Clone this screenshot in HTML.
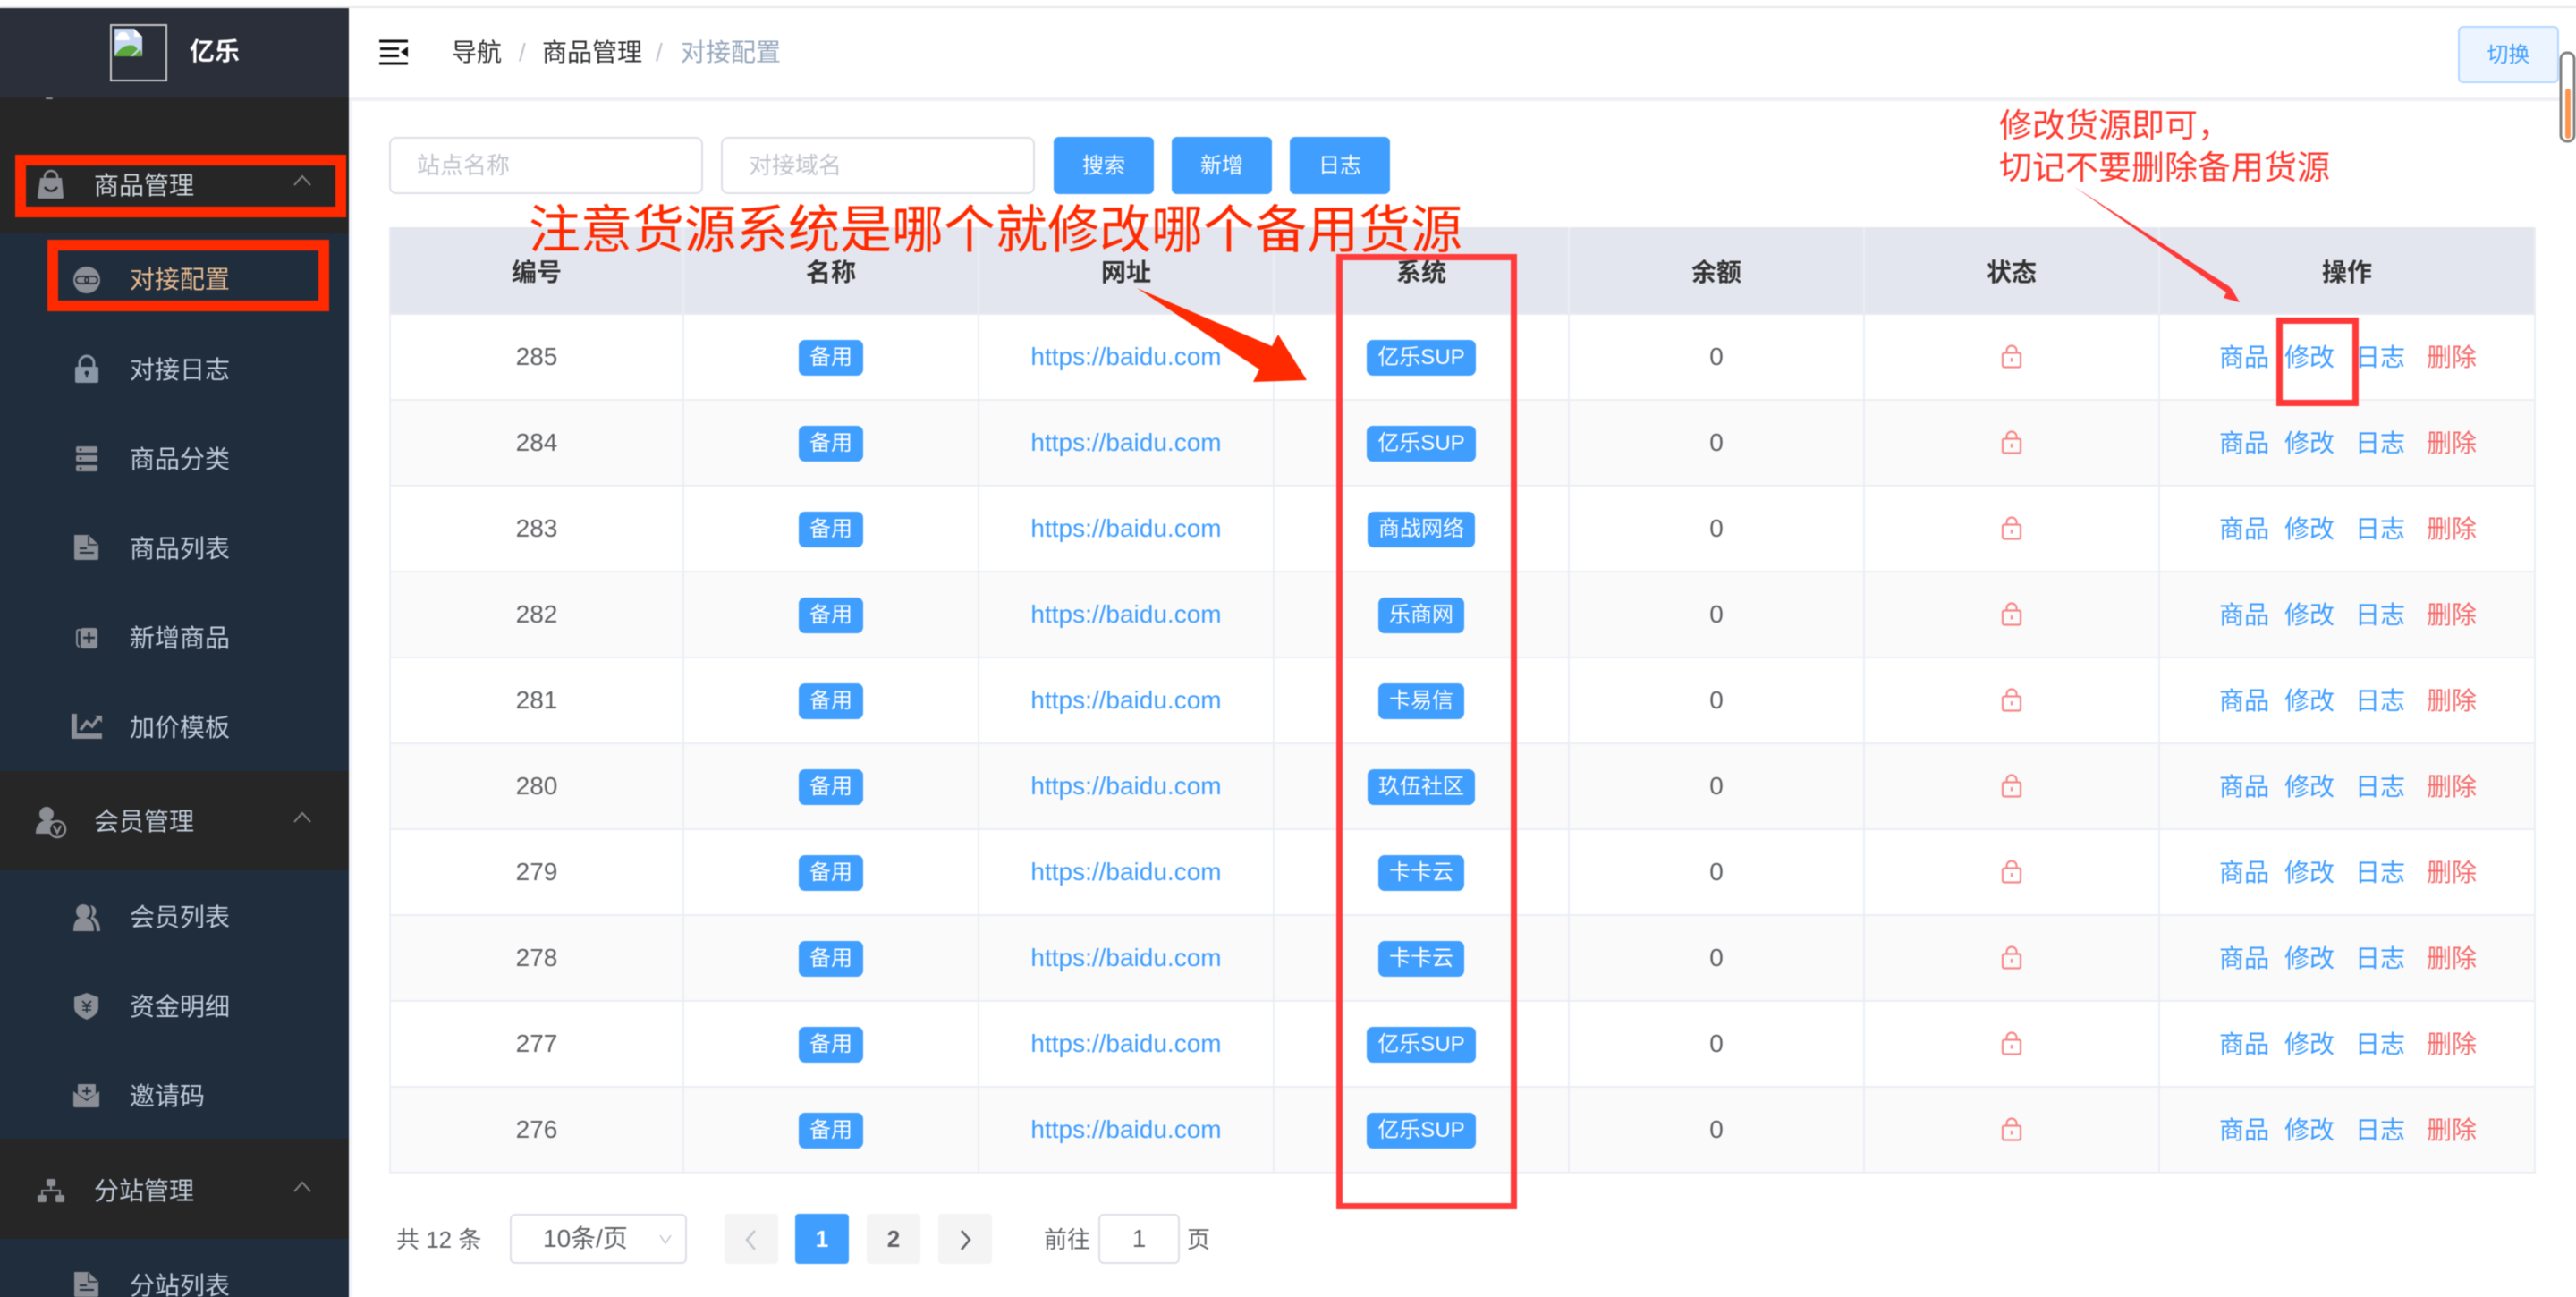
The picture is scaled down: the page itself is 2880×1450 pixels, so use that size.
<!DOCTYPE html>
<html lang="zh-CN"><head><meta charset="utf-8"><title>对接配置</title>
<style>
*{box-sizing:border-box;margin:0;padding:0}
html{background:#fff}
html,body{width:2880px;height:1450px;overflow:hidden;font-family:"Liberation Sans","Noto Sans CJK SC",sans-serif}
body{filter:blur(.5px)}
.a,.m,.s,.g,.b,.in,.p,.bc,.an{position:absolute}
#side{position:absolute;left:-4px;top:9px;width:394px;height:1450px;background:#1f2d3d;overflow:hidden}
.g{left:0;width:394px;background:#262626}
.m,.s{font-size:28px;line-height:40px;height:40px;color:#bfcbd9;white-space:nowrap}
.m{left:105px}.s{left:145px}
.bc{font-size:28px;line-height:40px;top:39px;white-space:nowrap}
.in{top:153px;width:351px;height:64px;border:2px solid #dcdfe6;border-radius:8px;font-size:26px;line-height:60px;color:#c0c4cc;padding-left:29px}
.b{top:153px;width:112px;height:64px;background:#409eff;border-radius:6px;color:#fff;font-size:24px;line-height:66px;text-align:center}
.r{position:absolute;left:435px;width:2400px;height:96px;display:flex;border-left:2px solid #ebeef5;border-bottom:2px solid #ebeef5;font-size:28px;color:#606266}
.r.e{background:#fafafa}
.r>i{font-style:normal;display:flex;align-items:center;justify-content:center;width:330px;height:100%;border-right:2px solid #ebeef5;position:relative}
.r>i:first-child{width:328px}
.r>i:last-child{width:420px}
.r.h{top:254px;height:98px;background:#e3e6ee;font-weight:700;color:#333;border-color:#e9ebf2}
.r.h>i{padding-top:2px;border-color:#ebedf3}
.r a{color:#409eff;text-decoration:none}
.r b{font-weight:400;display:block;height:40px;line-height:40px;margin-top:2px;padding:0 12px;background:#409eff;color:#fff;font-size:24px;border-radius:7px;white-space:nowrap}
.r .o a{position:absolute;top:1px;line-height:94px;white-space:nowrap}
.r .o .d{color:#f56c6c}
.p{top:1357px;width:60px;height:56px;background:#f4f4f5;border-radius:4px;font-size:26px;font-weight:700;color:#606266;line-height:56px;text-align:center}
.t{position:absolute;font-size:26px;line-height:40px;color:#606266;white-space:nowrap}
.an{color:#ff2a00;white-space:nowrap}
</style></head><body>

<div id="side">
<div class="a" style="left:0;top:0;width:394px;height:100px;background:#2b2f3a"></div>
<div class="g" style="top:100px;height:152px"></div>
<div class="g" style="top:853px;height:111px"></div>
<div class="g" style="top:1264px;height:112px"></div>
</div>

<div class="a" style="left:0;top:7px;width:2880px;height:2px;background:#e8e8e8"></div>
<div class="a" style="left:390px;top:109px;width:2490px;height:4px;background:#eff0f3"></div>
<div class="a" style="left:390px;top:113px;width:4px;height:1337px;background:#f3f4fa"></div>

<div class="a" style="left:123px;top:27px;width:64px;height:64px;border:2px solid #c8c8c8"></div>
<div class="a" style="left:212px;top:38px;font-size:28px;line-height:40px;font-weight:700;color:#fff">亿乐</div>

<div class="m" style="top:188px;color:#cdd5de">商品管理</div>
<div class="s" style="top:293px;color:#e6b98e">对接配置</div>
<div class="s" style="top:394px">对接日志</div>
<div class="s" style="top:494px">商品分类</div>
<div class="s" style="top:594px">商品列表</div>
<div class="s" style="top:694px">新增商品</div>
<div class="s" style="top:794px">加价模板</div>
<div class="m" style="top:899px">会员管理</div>
<div class="s" style="top:1006px">会员列表</div>
<div class="s" style="top:1106px">资金明细</div>
<div class="s" style="top:1206px">邀请码</div>
<div class="m" style="top:1312px">分站管理</div>
<div class="s" style="top:1418px">分站列表</div>

<div class="bc" style="left:505px;color:#303133">导航</div>
<div class="bc" style="left:580px;color:#c0c4cc">/</div>
<div class="bc" style="left:606px;color:#303133">商品管理</div>
<div class="bc" style="left:733px;color:#c0c4cc">/</div>
<div class="bc" style="left:761px;color:#97a8be">对接配置</div>

<div class="a" style="left:2748px;top:29px;width:113px;height:64px;background:#ecf5ff;border:2px solid #b3d8ff;border-radius:6px;color:#409eff;font-size:24px;line-height:62px;text-align:center">切换</div>

<div class="in" style="left:435px">站点名称</div>
<div class="in" style="left:806px">对接域名</div>
<div class="b" style="left:1178px">搜索</div>
<div class="b" style="left:1310px">新增</div>
<div class="b" style="left:1442px">日志</div>

<div class="r h"><i>编号</i><i>名称</i><i>网址</i><i>系统</i><i>余额</i><i>状态</i><i>操作</i></div>

<div class="r" style="top:352px"><i>285</i><i><b>备用</b></i><i><a>https://baidu.com</a></i><i><b>亿乐SUP</b></i><i>0</i><i><svg width="24" height="28"><use href="#lk"/></svg></i><i class="o"><a style="left:66px">商品</a><a style="left:139px">修改</a><a style="left:218px">日志</a><a style="left:298px" class="d">删除</a></i></div>
<div class="r e" style="top:448px"><i>284</i><i><b>备用</b></i><i><a>https://baidu.com</a></i><i><b>亿乐SUP</b></i><i>0</i><i><svg width="24" height="28"><use href="#lk"/></svg></i><i class="o"><a style="left:66px">商品</a><a style="left:139px">修改</a><a style="left:218px">日志</a><a style="left:298px" class="d">删除</a></i></div>
<div class="r" style="top:544px"><i>283</i><i><b>备用</b></i><i><a>https://baidu.com</a></i><i><b>商战网络</b></i><i>0</i><i><svg width="24" height="28"><use href="#lk"/></svg></i><i class="o"><a style="left:66px">商品</a><a style="left:139px">修改</a><a style="left:218px">日志</a><a style="left:298px" class="d">删除</a></i></div>
<div class="r e" style="top:640px"><i>282</i><i><b>备用</b></i><i><a>https://baidu.com</a></i><i><b>乐商网</b></i><i>0</i><i><svg width="24" height="28"><use href="#lk"/></svg></i><i class="o"><a style="left:66px">商品</a><a style="left:139px">修改</a><a style="left:218px">日志</a><a style="left:298px" class="d">删除</a></i></div>
<div class="r" style="top:736px"><i>281</i><i><b>备用</b></i><i><a>https://baidu.com</a></i><i><b>卡易信</b></i><i>0</i><i><svg width="24" height="28"><use href="#lk"/></svg></i><i class="o"><a style="left:66px">商品</a><a style="left:139px">修改</a><a style="left:218px">日志</a><a style="left:298px" class="d">删除</a></i></div>
<div class="r e" style="top:832px"><i>280</i><i><b>备用</b></i><i><a>https://baidu.com</a></i><i><b>玖伍社区</b></i><i>0</i><i><svg width="24" height="28"><use href="#lk"/></svg></i><i class="o"><a style="left:66px">商品</a><a style="left:139px">修改</a><a style="left:218px">日志</a><a style="left:298px" class="d">删除</a></i></div>
<div class="r" style="top:928px"><i>279</i><i><b>备用</b></i><i><a>https://baidu.com</a></i><i><b>卡卡云</b></i><i>0</i><i><svg width="24" height="28"><use href="#lk"/></svg></i><i class="o"><a style="left:66px">商品</a><a style="left:139px">修改</a><a style="left:218px">日志</a><a style="left:298px" class="d">删除</a></i></div>
<div class="r e" style="top:1024px"><i>278</i><i><b>备用</b></i><i><a>https://baidu.com</a></i><i><b>卡卡云</b></i><i>0</i><i><svg width="24" height="28"><use href="#lk"/></svg></i><i class="o"><a style="left:66px">商品</a><a style="left:139px">修改</a><a style="left:218px">日志</a><a style="left:298px" class="d">删除</a></i></div>
<div class="r" style="top:1120px"><i>277</i><i><b>备用</b></i><i><a>https://baidu.com</a></i><i><b>亿乐SUP</b></i><i>0</i><i><svg width="24" height="28"><use href="#lk"/></svg></i><i class="o"><a style="left:66px">商品</a><a style="left:139px">修改</a><a style="left:218px">日志</a><a style="left:298px" class="d">删除</a></i></div>
<div class="r e" style="top:1216px"><i>276</i><i><b>备用</b></i><i><a>https://baidu.com</a></i><i><b>亿乐SUP</b></i><i>0</i><i><svg width="24" height="28"><use href="#lk"/></svg></i><i class="o"><a style="left:66px">商品</a><a style="left:139px">修改</a><a style="left:218px">日志</a><a style="left:298px" class="d">删除</a></i></div>

<div class="t" style="left:443px;top:1366px">共 12 条</div>
<div class="a" style="left:570px;top:1357px;width:198px;height:56px;border:2px solid #dcdfe6;border-radius:6px;font-size:28px;line-height:52px;color:#606266;padding-left:35px;white-space:nowrap">10条/页</div>
<div class="p" style="left:810px"></div>
<div class="p" style="left:889px;background:#409eff;color:#fff">1</div>
<div class="p" style="left:969px">2</div>
<div class="p" style="left:1049px"></div>
<div class="t" style="left:1167px;top:1366px">前往</div>
<div class="a" style="left:1228px;top:1357px;width:91px;height:56px;border:2px solid #dcdfe6;border-radius:6px;font-size:28px;line-height:52px;color:#606266;text-align:center">1</div>
<div class="t" style="left:1327px;top:1366px">页</div>

<svg class="a" style="left:0;top:0;pointer-events:none" width="2880" height="1450" viewBox="0 0 2880 1450">
<defs>
<g id="lk" fill="none" stroke="#f78989" stroke-width="2.200"><rect x="2" y="9.500" width="20" height="16" rx="2"/><path d="M6.500 9.500V7a5.500 5.500 0 0 1 11 0v2.500"/><path d="M12 15v4.500"/></g>
<g id="doc"><path d="M83 2h16l11 11v15a2 2 0 0 1-2 2H85a2 2 0 0 1-2-2z" fill="#8b8e94"/><path d="M99 3v10h10" fill="none" stroke="#1f2d3d" stroke-width="1.500"/><path d="M89 17h8M89 22h16" stroke="#1f2d3d" stroke-width="2"/></g>
</defs>

<!-- broken image -->
<path d="M128 32h22l9 9v22h-31z" fill="#c9d8f2"/><path d="M128 63c6-10 14-14 22-12l4 4-8 8z" fill="#5aa83c"/><path d="M149 63l8-8 2 8z" fill="#5aa83c"/><path d="M132 40a5 4 0 0 1 11 0 3 3 0 0 1 1 5h-14a3 3 0 0 1 2-5z" fill="#fff"/><path d="M150 32v9h9" fill="#fff"/>
<rect x="51" y="109" width="8" height="2" rx="1" fill="#8b8e94"/>

<!-- hamburger -->
<path d="M424 46h32M425 54.500h21M425 62.500h21M424 71h32" stroke="#111" stroke-width="3"/><path d="M456 52v12l-8-6z" fill="#111"/>

<!-- group icons -->
<path d="M45 199h24l2 21a2 2 0 0 1-2 2H44a2 2 0 0 1-2-2z" fill="#8b8e94"/><path d="M50 200v-2a7 7 0 0 1 14 0v2" fill="none" stroke="#8b8e94" stroke-width="2.500"/><path d="M50 209c4 6 10 6 14 0" fill="none" stroke="#262626" stroke-width="2.500"/>
<path d="M329 207l9-10 9 10M329 919l9-10 9 10M329 1332l9-10 9 10" fill="none" stroke="#7f8288" stroke-width="2"/>
<circle cx="52" cy="910" r="8" fill="#8b8e94"/><path d="M40 932c0-10 5-15 14-15 6 0 9 2 10 4l-6 11z" fill="#8b8e94"/><circle cx="64" cy="927" r="9" fill="#262626" stroke="#8b8e94" stroke-width="2.500"/><path d="M60 923l4 8 4-8" fill="none" stroke="#8b8e94" stroke-width="2.500"/>
<rect x="52" y="1318" width="10" height="8" rx="2" fill="#8b8e94"/><rect x="42" y="1336" width="10" height="8" rx="2" fill="#8b8e94"/><rect x="62" y="1336" width="10" height="8" rx="2" fill="#8b8e94"/><path d="M57 1326v5M47 1336v-5h20v5" fill="none" stroke="#8b8e94" stroke-width="2"/>

<!-- sub icons -->
<circle cx="97" cy="313" r="15" fill="#8b8e94"/><g fill="none" stroke="#262d38" stroke-width="1.800"><rect x="85" y="309" width="14" height="8" rx="4"/><rect x="95" y="309" width="14" height="8" rx="4"/></g>
<rect x="84" y="410" width="26" height="18" rx="2" fill="#8a97a6"/><path d="M89 410v-4a8 8 0 0 1 16 0v4" fill="none" stroke="#8a97a6" stroke-width="3"/><circle cx="97" cy="417" r="2.500" fill="#1f2d3d"/><path d="M97 417v5" stroke="#1f2d3d" stroke-width="2"/>
<g fill="#8b8e94"><rect x="85" y="499" width="24" height="7" rx="2"/><rect x="85" y="509" width="24" height="7" rx="2"/><rect x="85" y="520" width="24" height="7" rx="2"/></g><g fill="#1f2d3d"><circle cx="90" cy="502.500" r="1.300"/><circle cx="90" cy="512.500" r="1.300"/><circle cx="90" cy="523.500" r="1.300"/></g>
<use href="#doc" y="596"/>
<path d="M90 704h-2a2 2 0 0 0-2 2v13a4 4 0 0 0 3 4" fill="none" stroke="#8b8e94" stroke-width="2"/><rect x="90" y="702" width="19" height="23" rx="3" fill="#8b8e94"/><path d="M93 713h13M99.500 707v12" stroke="#1f2d3d" stroke-width="2.500"/>
<path d="M80 798h6v22h28v6H82a2 2 0 0 1-2-2z" fill="#8b8e94"/><path d="M90 816l7-9 6 5 7-9" fill="none" stroke="#8b8e94" stroke-width="3.500"/><path d="M106 800h8v8z" fill="#8b8e94"/>
<circle cx="93" cy="1019" r="8" fill="#8b8e94"/><path d="M82 1041c0-11 4-15 11-15s12 4 12 15z" fill="#8b8e94"/><path d="M101 1012a7 7 0 0 1 3 13c5 2 8 8 8 16h-4c0-7-3-12-7-14 3-4 3-10 0-15z" fill="#8b8e94"/>
<path d="M97 1110l13 5v11c0 7-6 11-13 14-7-3-14-7-14-14v-11z" fill="#8b8e94"/><path d="M92 1119l5 5 5-5M97 1124v8M92 1125h10M92 1129h10" fill="none" stroke="#1f2d3d" stroke-width="1.600"/>
<path d="M88 1212h18a1 1 0 0 1 1 1v10l-10 6-10-6v-10a1 1 0 0 1 1-1z" fill="#8b8e94"/><path d="M82 1220l15 11 14-11v16a2 2 0 0 1-2 2H84a2 2 0 0 1-2-2z" fill="#8b8e94"/><path d="M92 1220h10M97 1215v9" stroke="#1f2d3d" stroke-width="2"/>
<use href="#doc" y="1420"/>

<!-- pager chevrons -->
<path d="M844 1376l-9 10 9 11" fill="none" stroke="#c0c4cc" stroke-width="2.500"/>
<path d="M1075 1376l9 10-9 11" fill="none" stroke="#606266" stroke-width="2.500"/>
<path d="M738 1381l6 9 6-9" fill="none" stroke="#c0c4cc" stroke-width="1.500"/>

<!-- scrollbar -->
<rect x="2863" y="59" width="15" height="99" rx="7" fill="#fff" stroke="#808080" stroke-width="3"/>
<rect x="2868" y="99" width="6" height="56" rx="3" fill="#fb9650"/>

<!-- annotations -->
<rect x="23" y="179" width="358" height="58" fill="none" stroke="#ff2a00" stroke-width="12"/>
<rect x="59" y="274" width="303" height="68" fill="none" stroke="#ff2a00" stroke-width="12"/>
<rect x="1497.500" y="287.500" width="195" height="1061" fill="none" stroke="#ff3b3b" stroke-width="7"/>
<rect x="2548.500" y="358.500" width="85" height="92" fill="none" stroke="#ff3838" stroke-width="7"/>
<path d="M1271 322L1422 387L1429 374L1461 425L1401 427L1408 413z" fill="#ff2a00"/>
<path d="M2318 208L2492 320L2495 323L2504 338L2486 333L2489 327z" fill="#ff3838"/>
</svg>

<div class="an" style="left:591px;top:224px;font-size:58px;line-height:68px">注意货源系统是哪个就修改哪个备用货源</div>
<div class="an" style="left:2235px;top:118px;font-size:37px;line-height:46px;color:#ff3b30">修改货源即可，</div>
<div class="an" style="left:2235px;top:165px;font-size:37px;line-height:46px;color:#ff3b30">切记不要删除备用货源</div>
</body></html>
